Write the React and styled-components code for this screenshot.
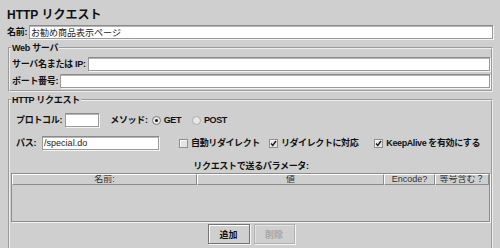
import React from "react";
import styled, { createGlobalStyle } from "styled-components";

const colors = {
  bg: "#cfcfcf",
  text: "#111111",
  dark: "#8c8c8c",
  light: "#f4f4f4",
  white: "#ffffff",
  disabled: "#a6a6a6",
};

const GlobalStyle = createGlobalStyle`
  * { box-sizing: border-box; }
  html, body {
    margin: 0;
    padding: 0;
    overflow: hidden;
    background: ${colors.bg};
  }
  body {
    font-family: "Liberation Sans", "Noto Sans CJK JP", sans-serif;
    color: ${colors.text};
  }
`;

const Page = styled.div`
  width: 500px;
  height: 248px;
  overflow: hidden;
  padding: 8px 7px 0 7px;
`;

const Title = styled.div`
  font-size: 12px;
  font-weight: 700;
  line-height: 14px;
  height: 14px;
`;

const Row = styled.div`
  display: flex;
  align-items: center;
  height: 14px;
  gap: ${(p) => p.$gap ?? 2}px;
  margin-top: ${(p) => p.$top || 0}px;
  padding-left: ${(p) => p.$indent || 0}px;
`;

const Label = styled.span`
  font-size: 9px;
  font-weight: 700;
  line-height: 12px;
  letter-spacing: -0.3px;
  white-space: nowrap;
  margin-left: ${(p) => p.$before || 0}px;
  margin-right: ${(p) => p.$after || 0}px;
`;

const TextField = styled.input`
  height: 14px;
  flex: ${(p) => (p.$width ? "0 0 auto" : "1 1 0")};
  width: ${(p) => (p.$width ? `${p.$width}px` : "auto")};
  min-width: 0;
  margin: 0;
  padding: 0 1px;
  font-family: "Liberation Sans", "Noto Sans CJK JP", sans-serif;
  font-size: 9px;
  color: #222;
  background: ${colors.white};
  border: 1px solid #9a9a9a;
  border-top-color: #8a8a8a;
  box-shadow: inset 0 1px 0 #b4b4b4, 1px 1px 0 ${colors.light};
  outline: none;
`;

const Group = styled.fieldset`
  margin: ${(p) => p.$top}px 0 0 1px;
  padding: 0 1px ${(p) => p.$bottom}px 2px;
  border: 2px groove #eeeeee;
  min-width: 0;
`;

const Legend = styled.legend`
  font-size: 9px;
  font-weight: 700;
  line-height: 12px;
  letter-spacing: -0.3px;
  padding: 0 1px;
  margin-left: -1px;
`;

const Rows = styled.div`
  display: flex;
  flex-direction: column;
  gap: 3px;
  padding-top: ${(p) => p.$top}px;
`;

const Choice = styled.label`
  display: flex;
  align-items: center;
  gap: 3px;
  font-size: 9px;
  font-weight: 700;
  line-height: 12px;
  letter-spacing: -0.4px;
  white-space: nowrap;
  margin-left: ${(p) => p.$left || 0}px;
`;

const Radio = styled.span`
  width: 9px;
  height: 9px;
  border-radius: 50%;
  border: 1px solid ${(p) => (p.$on ? "#7a7a7a" : "#ababab")};
  background: #e8e8e8;
  display: flex;
  align-items: center;
  justify-content: center;

  &::after {
    content: "";
    width: 3px;
    height: 3px;
    border-radius: 50%;
    background: ${(p) => (p.$on ? "#111" : "transparent")};
  }
`;

const Box = styled.span`
  width: 9px;
  height: 9px;
  border: 1px solid #8e8e8e;
  background: #e4e4e4;
  box-shadow: inset 1px 1px 0 #fafafa;
  display: flex;
  align-items: center;
  justify-content: center;
`;

const Caption = styled.div`
  margin-top: 11px;
  font-size: 9px;
  font-weight: 700;
  line-height: 11px;
  letter-spacing: -0.3px;
  text-align: center;
`;

const Table = styled.div`
  margin: 1px 0 0 -1px;
  border: 1px solid ${colors.dark};
  box-shadow: 1px 1px 0 ${colors.light};
  height: 49px;
  display: flex;
  flex-direction: column;
`;

const HeadRow = styled.div`
  display: grid;
  grid-template-columns: 185px 187px 51px 1fr;
  height: 11px;
`;

const HeadCell = styled.div`
  border-top: 1px solid ${colors.white};
  border-left: 1px solid ${colors.white};
  border-right: 1px solid ${colors.dark};
  border-bottom: 1px solid ${colors.dark};
  font-size: 9px;
  line-height: 9px;
  color: #333;
  text-align: center;
  white-space: nowrap;
  overflow: hidden;
`;

const Buttons = styled.div`
  display: flex;
  justify-content: center;
  gap: 4px;
  margin-top: 2px;
`;

const Button = styled.button`
  width: ${(p) => p.$w}px;
  height: 20px;
  margin: 0;
  padding: 0;
  font-family: "Liberation Sans", "Noto Sans CJK JP", sans-serif;
  font-size: 9px;
  font-weight: 700;
  color: ${(p) => (p.disabled ? colors.disabled : colors.text)};
  background: ${colors.bg};
  border: 1px solid ${(p) => (p.disabled ? "#b2b2b2" : "#747474")};
  box-shadow: inset 1px 1px 0 ${(p) => (p.disabled ? "#e2e2e2" : colors.white)},
    1px 1px 0 ${colors.light};
`;

const Check = () => (
  <svg width="7" height="7" viewBox="0 0 7 7">
    <path d="M1 3.5 L2.8 5.5 L6 1" stroke="#1a1a1a" strokeWidth="1.4" fill="none" />
  </svg>
);

export default function App() {
  return (
    <Page>
      <GlobalStyle />
      <Title>HTTP リクエスト</Title>
      <Row $top={3}>
        <Label>名前:</Label>
        <TextField defaultValue="お勧め商品表示ページ" />
      </Row>

      <Group $top={3} $bottom={2}>
        <Legend>Web サーバ</Legend>
        <Rows $top={3}>
          <Row>
            <Label>サーバ名または IP:</Label>
            <TextField />
          </Row>
          <Row>
            <Label>ポート番号:</Label>
            <TextField />
          </Row>
        </Rows>
      </Group>

      <Group $top={2} $bottom={10}>
        <Legend>HTTP リクエスト</Legend>
        <Row $top={7} $indent={4} $gap={0}>
          <Label $after={3}>プロトコル:</Label>
          <TextField $width={34} />
          <Label $before={11}>メソッド:</Label>
          <Choice $left={4}>
            <Radio $on />
            GET
          </Choice>
          <Choice $left={11}>
            <Radio />
            POST
          </Choice>
        </Row>
        <Row $top={9} $indent={4} $gap={0}>
          <Label $after={6}>パス:</Label>
          <TextField $width={117} defaultValue="/special.do" />
          <Choice $left={20}>
            <Box />
            自動リダイレクト
          </Choice>
          <Choice $left={9}>
            <Box>
              <Check />
            </Box>
            リダイレクトに対応
          </Choice>
          <Choice $left={16}>
            <Box>
              <Check />
            </Box>
            KeepAlive を有効にする
          </Choice>
        </Row>
        <Caption>リクエストで送るパラメータ:</Caption>
        <Table>
          <HeadRow>
            <HeadCell>名前:</HeadCell>
            <HeadCell>値</HeadCell>
            <HeadCell>Encode?</HeadCell>
            <HeadCell>等号含む？</HeadCell>
          </HeadRow>
        </Table>
        <Buttons>
          <Button $w={42}>追加</Button>
          <Button $w={41} disabled>
            削除
          </Button>
        </Buttons>
      </Group>
    </Page>
  );
}
